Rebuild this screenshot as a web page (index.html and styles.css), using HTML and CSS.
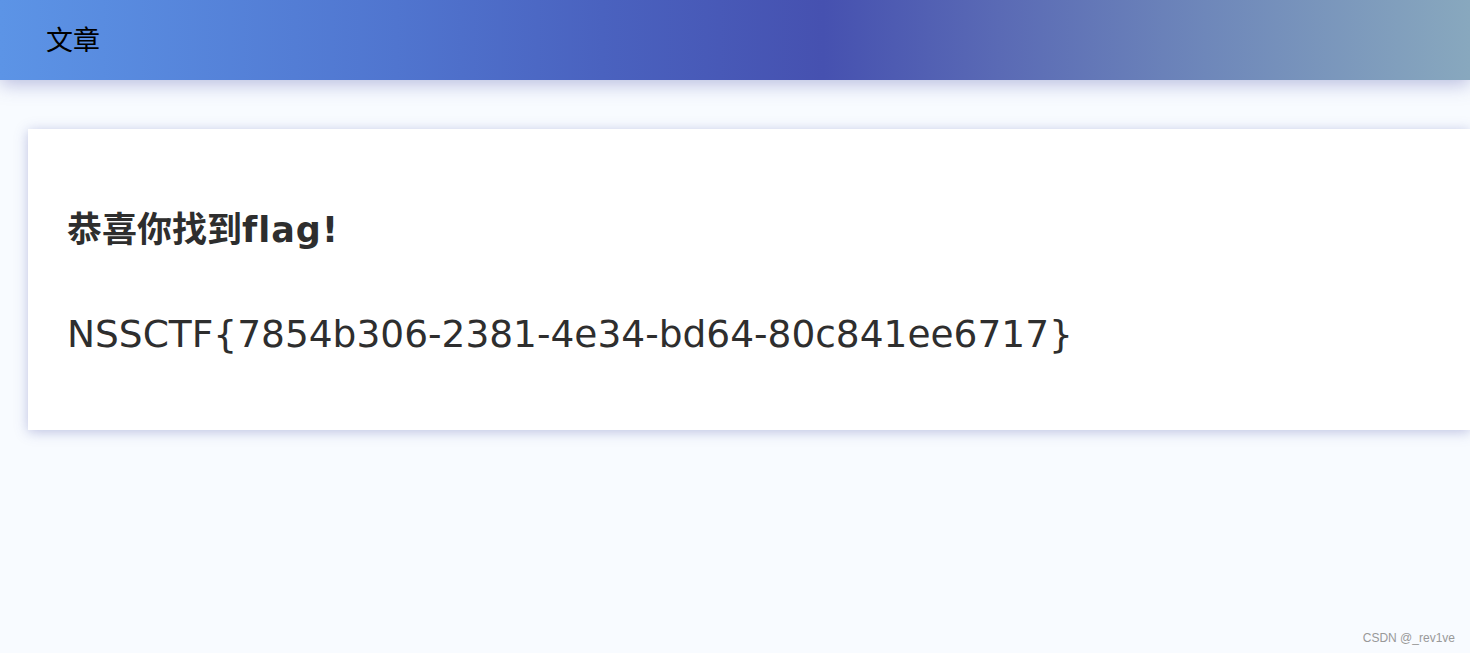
FILE: index.html
```html
<!DOCTYPE html>
<html lang="zh">
<head>
<meta charset="utf-8">
<title>文章</title>
<link rel="stylesheet" href="styles.css">
</head>
<body>
<header class="topbar">
  <span class="brand">文章</span>
</header>
<main class="content">
  <section class="card">
    <h2 class="card-title">恭喜你找到<span class="latin">flag!</span></h2>
    <p class="flag">NSSCTF{7854b306-2381-4e34-bd64-80c841ee6717}</p>
  </section>
</main>
<div class="watermark">CSDN @_rev1ve</div>
</body>
</html>
```

FILE: styles.css
```css
html, body {
  margin: 0;
  padding: 0;
}
body {
  width: 1470px;
  height: 653px;
  overflow: hidden;
  background: #f8fbff;
  font-family: "DejaVu Sans", "Noto Sans CJK SC", sans-serif;
  position: relative;
}
.topbar {
  height: 80px;
  display: flex;
  align-items: center;
  padding-left: 46px;
  background: linear-gradient(90deg, #5c94e6 0%, #5075cf 27%, #4a62bf 41%, #4651b0 56%, #5a6ab5 68%, #6e87ba 82%, #88a8be 100%);
  box-shadow: 0 4px 18px rgba(60, 70, 160, 0.35);
  position: relative;
  z-index: 1;
}
.brand {
  font-family: "Noto Sans CJK SC", sans-serif;
  font-size: 27px;
  color: #000;
  line-height: 1;
  margin-top: -4px;
}
.content {
  padding: 49px 0 0 28px;
}
.card {
  background: #fff;
  box-shadow: 0 2px 12px rgba(80, 90, 170, 0.35);
  padding: 79px 0 70px 39px;
  height: 152px;
}
.card-title {
  margin: 0;
  font-size: 35px;
  font-weight: bold;
  color: #2e2e2e;
  line-height: 44px;
  font-family: "DejaVu Sans", "Noto Sans CJK SC", sans-serif;
}
.latin {
  letter-spacing: 1px;
}
.flag {
  margin: 60px 0 0;
  font-size: 37.5px;
  color: #2e2e2e;
  line-height: 44px;
}
.watermark {
  position: absolute;
  right: 15px;
  bottom: 8px;
  font-family: "Liberation Sans", Arial, sans-serif;
  font-size: 12px;
  color: #999;
}
```
